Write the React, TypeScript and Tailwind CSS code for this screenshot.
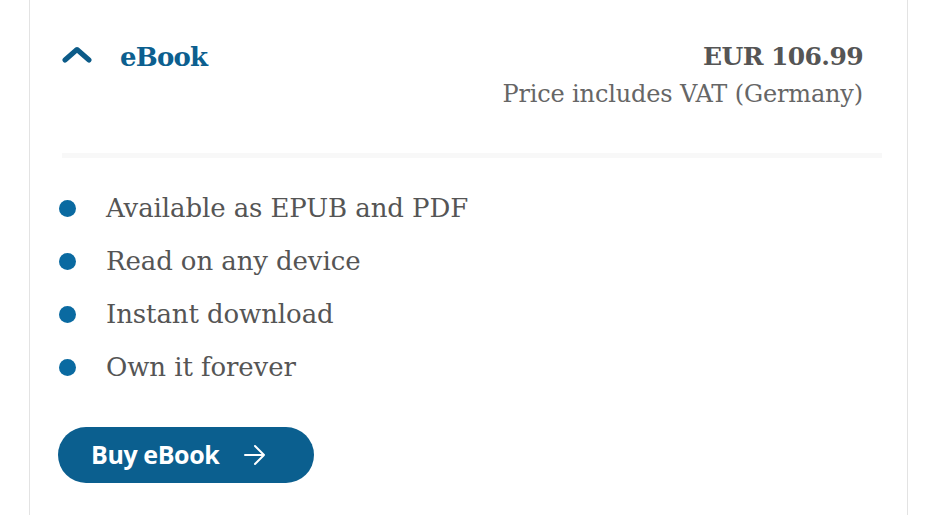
import { FC } from "react";

const serif = { fontFamily: '"DejaVu Serif", "Liberation Serif", serif' };

// list of what you get with the ebook
const features = [
  "Available as EPUB and PDF",
  "Read on any device",
  "Instant download",
  "Own it forever",
];

const Feature: FC<{ text: string }> = ({ text }) => (
  <li className="flex items-center h-[53px]">
    <span className="w-[17px] h-[17px] rounded-full bg-[#0a6aa1] ml-[29px] mr-[30px] shrink-0" />
    <span className="text-[26px] text-[#555555] tracking-[-0.1px]">{text}</span>
  </li>
);

export default function App() {
  return (
    <div className="w-[936px] h-[515px] bg-white overflow-hidden" style={serif}>
      <div className="ml-[29px] w-[879px] h-full border-x border-[#e3e3e3] pl-[32px] pr-[25px]">
        {/* header: toggle + title, price on the right */}
        <div className="flex justify-between pt-[39px] pr-[19px]">
          <div className="flex items-start">
            <svg className="mt-[7px]" width="30" height="17" viewBox="0 0 30 17" fill="none">
              <path d="M3 14L15 3.5L27 14" stroke="#0c5b88" strokeWidth="5" strokeLinecap="round" strokeLinejoin="round" />
            </svg>
            <span className="ml-[28px] text-[26px] leading-[36px] text-[#0c5f8f] font-bold tracking-[-0.8px]">eBook</span>
          </div>
          <div className="flex flex-col items-end">
            <span className="text-[25px] leading-[36px] font-bold text-[#555555] tracking-[-0.6px]">EUR 106.99</span>
            <span className="text-[24px] leading-[38px] text-[#666666] tracking-[-0.15px]">Price includes VAT (Germany)</span>
          </div>
        </div>
        <div className="mt-[40px] h-[5px] bg-[#f8f8f8]" />
        <ul className="mt-[24px] -ml-[32px]">
          {features.map((f) => <Feature key={f} text={f} />)}
        </ul>
        <button
          className="mt-[33px] -ml-[4px] flex items-center h-[56px] w-[256px] rounded-full bg-[#0b5f8f] text-white pl-[33px]"
        >
          <span className="text-[25px] font-bold tracking-[-0.4px]" style={{ fontFamily: '"Open Sans", "Noto Sans", sans-serif' }}>Buy eBook</span>
          <svg className="ml-[24px]" width="24" height="22" viewBox="0 0 24 22" fill="none">
            <path d="M2 11H21M12 2L21 11L12 20" stroke="white" strokeWidth="2" strokeLinecap="round" strokeLinejoin="round" />
          </svg>
        </button>
      </div>
    </div>
  );
}
